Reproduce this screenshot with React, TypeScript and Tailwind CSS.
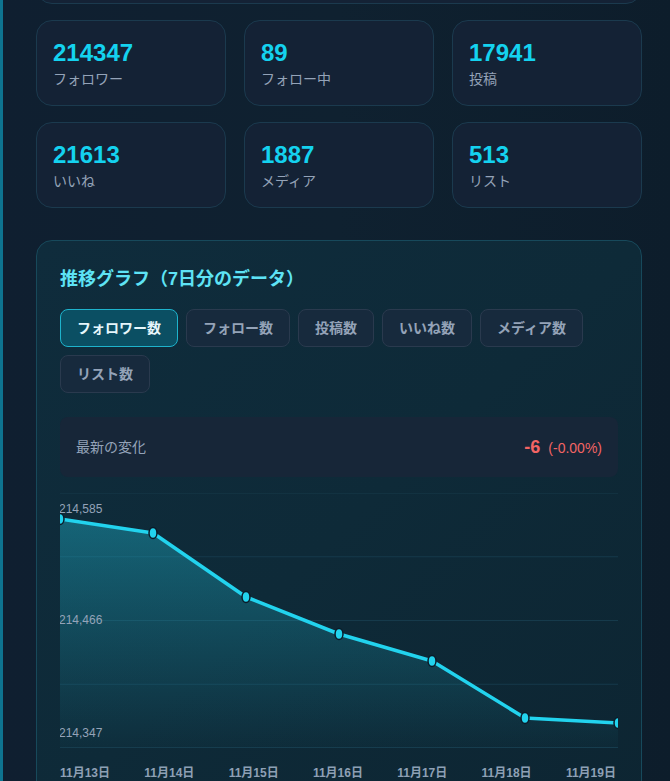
import React from "react";

const stats = [
  { value: "214347", label: "フォロワー" },
  { value: "89", label: "フォロー中" },
  { value: "17941", label: "投稿" },
  { value: "21613", label: "いいね" },
  { value: "1887", label: "メディア" },
  { value: "513", label: "リスト" },
];

const tabs = ["フォロワー数", "フォロー数", "投稿数", "いいね数", "メディア数", "リスト数"];

const dates = ["11月13日", "11月14日", "11月15日", "11月16日", "11月17日", "11月18日", "11月19日"];

const W = 558;
const H = 255;

// plot coords inside the W x H box
const points = [26, 40, 104, 141, 168, 225, 230].map((y, i) => ({ x: (W / 6) * i, y }));

const font = { fontFamily: '"Liberation Sans", "Noto Sans CJK JP", sans-serif' };

export default function App() {
  return (
    <div style={font} className="flex min-h-[781px] overflow-hidden bg-[#0f1f2f]">
      <div className="w-[3px] shrink-0 bg-[#0e7490]" />
      <main className="min-w-0 flex-1 bg-gradient-to-r from-[#0f1f30] via-[#0f2130] to-[#0d1d2b] pl-[33px] pr-[28px]">
        <div className="-mt-[60px] h-[64px] rounded-2xl border border-[#1b3a4e] bg-[#142235]" />

        <div className="mt-4 grid grid-cols-3 gap-x-[18px] gap-y-4">
          {stats.map((s) => (
            <StatCard key={s.label} value={s.value} label={s.label} />
          ))}
        </div>

        <section className="mt-8 rounded-2xl border border-[#17495b] bg-gradient-to-br from-[#0f2c3c] via-[#0e2a38] to-[#0d2532] px-[23px] pb-10 pt-6">
          <h2 className="text-lg font-bold leading-7 text-[#5ee3f5]">
            推移グラフ（7日分のデータ）
          </h2>

          <div className="mt-4 flex flex-wrap gap-2">
            {tabs.map((t, i) => (
              <button
                key={t}
                className={
                  i === 0
                    ? "rounded-lg border border-[#1eb3cc] bg-[#0b4f63] px-4 py-2 text-sm font-bold leading-5 text-[#e6f6fb]"
                    : "rounded-lg border border-[#2a3a4e] bg-[#172a3d] px-4 py-2 text-sm font-bold leading-5 text-[#94a3b8]"
                }
              >
                {t}
              </button>
            ))}
          </div>

          <div className="mt-6 flex items-center justify-between rounded-lg bg-[#172638] px-4 py-4">
            <span className="text-sm leading-7 text-[#94a3b8]">最新の変化</span>
            <span className="flex items-baseline gap-2 text-[#f26464]">
              <span className="text-lg font-bold leading-7">-6</span>
              <span className="text-sm">(-0.00%)</span>
            </span>
          </div>

          <div className="mt-4">
            <TrendChart />
            <div className="mt-[17px] flex justify-between pr-[2px] text-xs font-semibold leading-4 text-[#8ea0b5]">
              {dates.map((d) => (
                <span key={d}>{d}</span>
              ))}
            </div>
          </div>
        </section>
      </main>
    </div>
  );
}

function StatCard({ value, label }: { value: string; label: string }) {
  return (
    <div className="rounded-2xl border border-[#1b3a4e] bg-[#142235] p-4">
      <p className="text-2xl font-bold leading-8 text-[#14d2ef]">{value}</p>
      <p className="text-sm leading-5 text-[#94a3b8]">{label}</p>
    </div>
  );
}

function TrendChart() {
  const line = points.map((p, i) => `${i === 0 ? "M" : "L"}${p.x.toFixed(1)},${p.y}`).join(" ");
  const area = `${line} L${W},${H} L0,${H} Z`;
  return (
    <svg width={W} height={H} viewBox={`0 0 ${W} ${H}`} className="block overflow-hidden">
      <defs>
        <linearGradient id="fillGrad" x1="0" y1="0" x2="0" y2="1">
          <stop offset="0%" stopColor="#22d3ee" stopOpacity="0.34" />
          <stop offset="100%" stopColor="#22d3ee" stopOpacity="0.02" />
        </linearGradient>
        <clipPath id="plot">
          <rect x="0" y="-10" width={W} height={H + 20} />
        </clipPath>
      </defs>
      {[0, 63.75, 127.5, 191.25, 254.5].map((y) => (
        <line key={y} x1="0" x2={W} y1={y} y2={y} stroke="#163a4b" strokeWidth="1" />
      ))}
      <g clipPath="url(#plot)">
        <path d={area} fill="url(#fillGrad)" />
        <path d={line} fill="none" stroke="#22d3ee" strokeWidth="3.5" strokeLinejoin="round" />
        {points.map((p) => (
          <ellipse
            key={p.x}
            cx={p.x}
            cy={p.y}
            rx="4"
            ry="5.5"
            fill="#22d3ee"
            stroke="#0b1a28"
            strokeWidth="1.5"
          />
        ))}
      </g>
      <text x="-1" y="20" fontSize="12" fill="#94a3b8" style={font}>
        214,585
      </text>
      <text x="-1" y="131" fontSize="12" fill="#94a3b8" style={font}>
        214,466
      </text>
      <text x="-1" y="244" fontSize="12" fill="#94a3b8" style={font}>
        214,347
      </text>
    </svg>
  );
}
